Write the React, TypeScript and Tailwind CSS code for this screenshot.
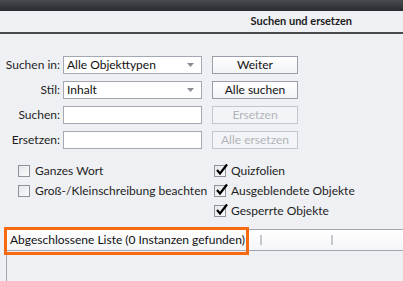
import React from "react";

const font = { fontFamily: 'Lato, "Liberation Sans", sans-serif' };

function Label({ children }: { children: React.ReactNode }) {
  return (
    <div className="w-[61px] whitespace-nowrap pr-[1px] text-right text-[12px] leading-[18px] text-[#1e1e1e]">
      {children}
    </div>
  );
}

function Select({ value }: { value: string }) {
  return (
    <div className="ml-[2px] flex h-[18px] w-[139px] items-center border border-[#a4a8b3] bg-white">
      <span className="flex-1 pl-[3px] text-[12px] leading-[16px] text-[#111]">{value}</span>
      <svg width="9" height="6" viewBox="0 0 9 6" className="mr-[6px]">
        <path d="M1 1 L8 1 L4.5 5 Z" fill="#8a8d94" />
      </svg>
    </div>
  );
}

function Input() {
  return <div className="ml-[2px] h-[18px] w-[139px] border border-[#a4a8b3] bg-white" />;
}

function Btn({ children, disabled }: { children: React.ReactNode; disabled?: boolean }) {
  return (
    <div
      className={
        "ml-[10px] flex h-[18px] w-[86px] items-center justify-center border text-[12px] leading-[16px] " +
        (disabled
          ? "border-[#c3c6ce] bg-[#f3f4f7] text-[#b2b4ba]"
          : "border-[#9a9ea9] bg-gradient-to-b from-white to-[#f2f3f6] text-[#111]")
      }
    >
      {children}
    </div>
  );
}

function Check({ label, checked }: { label: string; checked?: boolean }) {
  return (
    <div className="flex h-[20px] items-center whitespace-nowrap">
      <div className="relative h-[12px] w-[12px] shrink-0 border border-[#8e929c] bg-gradient-to-br from-[#e4e6ea] to-[#fbfbfc]">
        {checked && (
          <svg width="14" height="13" viewBox="0 0 14 13" className="absolute left-[0px] top-[-3px]">
            <path d="M2 7 L5 10.5 L12 1.5" stroke="#000" strokeWidth="2.2" fill="none" />
          </svg>
        )}
      </div>
      <span className="ml-[5px] text-[12px] text-[#1e1e1e]">{label}</span>
    </div>
  );
}

export default function App() {
  return (
    <div className="relative h-[281px] w-[403px] overflow-hidden bg-[#eff0f4]" style={font}>
      <div className="h-[11px] bg-gradient-to-b from-[#4a4b50] to-[#2a2b2f]" />
      <div className="flex h-[23px] items-center justify-end border-b-2 border-[#4a4a4e] pr-[51px]">
        <span className="text-[11px] font-bold text-[#1b1b1b]">Suchen und ersetzen</span>
      </div>

      <div className="mt-[22px] flex flex-col gap-[7px]">
        <div className="flex items-center">
          <Label>Suchen in:</Label>
          <Select value="Alle Objekttypen" />
          <Btn>Weiter</Btn>
        </div>
        <div className="flex items-center">
          <Label>Stil:</Label>
          <Select value="Inhalt" />
          <Btn>Alle suchen</Btn>
        </div>
        <div className="flex items-center">
          <Label>Suchen:</Label>
          <Input />
          <Btn disabled>Ersetzen</Btn>
        </div>
        <div className="flex items-center">
          <Label>Ersetzen:</Label>
          <Input />
          <Btn disabled>Alle ersetzen</Btn>
        </div>
      </div>

      <div className="mt-[12px] flex">
        <div className="ml-[18px] w-[196px]">
          <Check label="Ganzes Wort" />
          <Check label="Groß-/Kleinschreibung beachten" />
        </div>
        <div>
          <Check label="Quizfolien" checked />
          <Check label="Ausgeblendete Objekte" checked />
          <Check label="Gesperrte Objekte" checked />
        </div>
      </div>

      <div className="ml-[6px] mt-[8px]">
        <div className="flex h-[22px] items-center border-y border-l border-[#a3a7b2] bg-gradient-to-b from-white to-[#f4f5f8]">
          <span className="ml-[3px] w-[250px] whitespace-nowrap text-[12px] text-[#111]">Abgeschlossene Liste (0 Instanzen gefunden)</span>
          <div className="h-[10px] w-[2px] bg-[#c4c7ce]" />
          <div className="ml-[69px] h-[10px] w-[2px] bg-[#c4c7ce]" />
        </div>
        <div className="h-[40px] border-l border-[#a3a7b2]" />
      </div>

      <div className="absolute left-[4px] top-[227px] h-[28px] w-[245px] border-[3px] border-[#f86a10]" />
    </div>
  );
}
